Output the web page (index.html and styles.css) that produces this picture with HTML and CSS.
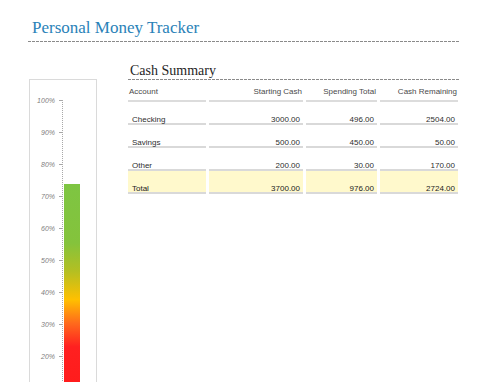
FILE: index.html
```html
<!DOCTYPE html>
<html>
<head>
<meta charset="utf-8">
<title>Personal Money Tracker</title>
<link rel="stylesheet" href="styles.css">
</head>
<body>
<header class="page-header">
  <h1 class="page-title">Personal Money Tracker</h1>
</header>
<main class="main">
  <div class="chart-box">
    <svg class="chart" width="66" height="320" viewBox="0 0 66 320">
      <defs>
        <linearGradient id="barGrad" gradientUnits="userSpaceOnUse" x1="0" y1="104" x2="0" y2="340">
          <stop offset="0" stop-color="#7ec542"/>
          <stop offset="0.25" stop-color="#84c33c"/>
          <stop offset="0.37" stop-color="#b4bf22"/>
          <stop offset="0.49" stop-color="#ffc000"/>
          <stop offset="0.59" stop-color="#ff6a1c"/>
          <stop offset="0.69" stop-color="#ff2020"/>
          <stop offset="1" stop-color="#ff1818"/>
        </linearGradient>
      </defs>
      <line class="axis" x1="32.5" y1="20" x2="32.5" y2="340"/>
      <g class="ticks">
        <line x1="29" y1="20.5" x2="32" y2="20.5"/>
        <line x1="29" y1="52.5" x2="32" y2="52.5"/>
        <line x1="29" y1="84.5" x2="32" y2="84.5"/>
        <line x1="29" y1="116.5" x2="32" y2="116.5"/>
        <line x1="29" y1="148.5" x2="32" y2="148.5"/>
        <line x1="29" y1="180.5" x2="32" y2="180.5"/>
        <line x1="29" y1="212.5" x2="32" y2="212.5"/>
        <line x1="29" y1="244.5" x2="32" y2="244.5"/>
        <line x1="29" y1="276.5" x2="32" y2="276.5"/>
      </g>
      <g class="labels">
        <text x="25" y="23">100%</text>
        <text x="25" y="55">90%</text>
        <text x="25" y="87">80%</text>
        <text x="25" y="119">70%</text>
        <text x="25" y="151">60%</text>
        <text x="25" y="183">50%</text>
        <text x="25" y="215">40%</text>
        <text x="25" y="247">30%</text>
        <text x="25" y="279">20%</text>
      </g>
      <rect x="34" y="104" width="16" height="236" fill="url(#barGrad)"/>
    </svg>
  </div>
  <section class="summary">
    <h2 class="summary-title">Cash Summary</h2>
    <table class="summary-table">
      <colgroup>
        <col class="c1"><col class="c2"><col class="c3"><col class="c4">
      </colgroup>
      <thead>
        <tr>
          <th class="left">Account</th>
          <th class="right">Starting Cash</th>
          <th class="right">Spending Total</th>
          <th class="right">Cash Remaining</th>
        </tr>
      </thead>
      <tbody>
        <tr>
          <td class="left">Checking</td>
          <td class="right">3000.00</td>
          <td class="right">496.00</td>
          <td class="right">2504.00</td>
        </tr>
        <tr>
          <td class="left">Savings</td>
          <td class="right">500.00</td>
          <td class="right">450.00</td>
          <td class="right">50.00</td>
        </tr>
        <tr>
          <td class="left">Other</td>
          <td class="right">200.00</td>
          <td class="right">30.00</td>
          <td class="right">170.00</td>
        </tr>
        <tr class="total">
          <td class="left">Total</td>
          <td class="right">3700.00</td>
          <td class="right">976.00</td>
          <td class="right">2724.00</td>
        </tr>
      </tbody>
    </table>
  </section>
</main>
</body>
</html>
```
FILE: styles.css
```css
html, body {
  margin: 0;
  padding: 0;
  overflow: hidden;
  background: #ffffff;
}

body {
  font-family: "Liberation Sans", Arial, sans-serif;
  width: 498px;
  height: 382px;
}

.page-header {
  margin-left: 28px;
  width: 431px;
  padding-top: 18px;
  padding-bottom: 4px;
  background-image: repeating-linear-gradient(to right, #8a8a8a 0 3px, transparent 3px 4px);
  background-size: 100% 1px;
  background-position: left bottom;
  background-repeat: no-repeat;
}

.page-title {
  margin: 0;
  padding-left: 4px;
  font-family: "Liberation Serif", "Times New Roman", serif;
  font-weight: normal;
  font-size: 17px;
  line-height: 20px;
  color: #2a82b8;
}

.main {
  display: flex;
  align-items: flex-start;
  margin-left: 29px;
}

.chart-box {
  margin-top: 37px;
  width: 66px;
  height: 320px;
  border: 1px solid #dadada;
  flex: none;
}

.chart {
  display: block;
}

.axis {
  stroke: #a8a8a8;
  stroke-width: 1;
  stroke-dasharray: 1 1;
}

.ticks line {
  stroke: #a8a8a8;
  stroke-width: 1;
}

.labels text {
  font-family: "Liberation Sans", Arial, sans-serif;
  font-style: italic;
  font-size: 7px;
  fill: #808080;
  text-anchor: end;
}

.summary {
  margin-left: 31px;
  width: 331px;
}

.summary-title {
  margin: 21px 0 0 0;
  padding-left: 2px;
  padding-bottom: 1px;
  font-family: "Liberation Serif", "Times New Roman", serif;
  font-weight: normal;
  font-size: 14px;
  line-height: 16px;
  color: #262626;
  background-image: repeating-linear-gradient(to right, #8a8a8a 0 3px, transparent 3px 4px);
  background-size: 100% 1px;
  background-position: left bottom;
  background-repeat: no-repeat;
}

.summary-table {
  margin-left: -3px;
  border-collapse: separate;
  border-spacing: 3px 0;
  table-layout: fixed;
  width: 336px;
  font-size: 8px;
}

.c1 { width: 78px; }
.c2 { width: 94px; }
.c3 { width: 71px; }
.c4 { width: 78px; }

.summary-table th {
  font-weight: normal;
  color: #4a4a4a;
  line-height: 10px;
  padding: 7px 1px 3px 1px;
  border-bottom: 2px solid #dcdcdc;
  white-space: nowrap;
}

.summary-table td {
  color: #2e2e2e;
  line-height: 7px;
  padding: 14px 3px 0 4px;
  border-bottom: 2px solid #d9d9d9;
  white-space: nowrap;
}

.summary-table td.right {
  padding-left: 3px;
  padding-right: 3px;
}

.left { text-align: left; }
.right { text-align: right; }

.summary-table tr.total td {
  background: #fff9cc;
  color: #222222;
}
```
